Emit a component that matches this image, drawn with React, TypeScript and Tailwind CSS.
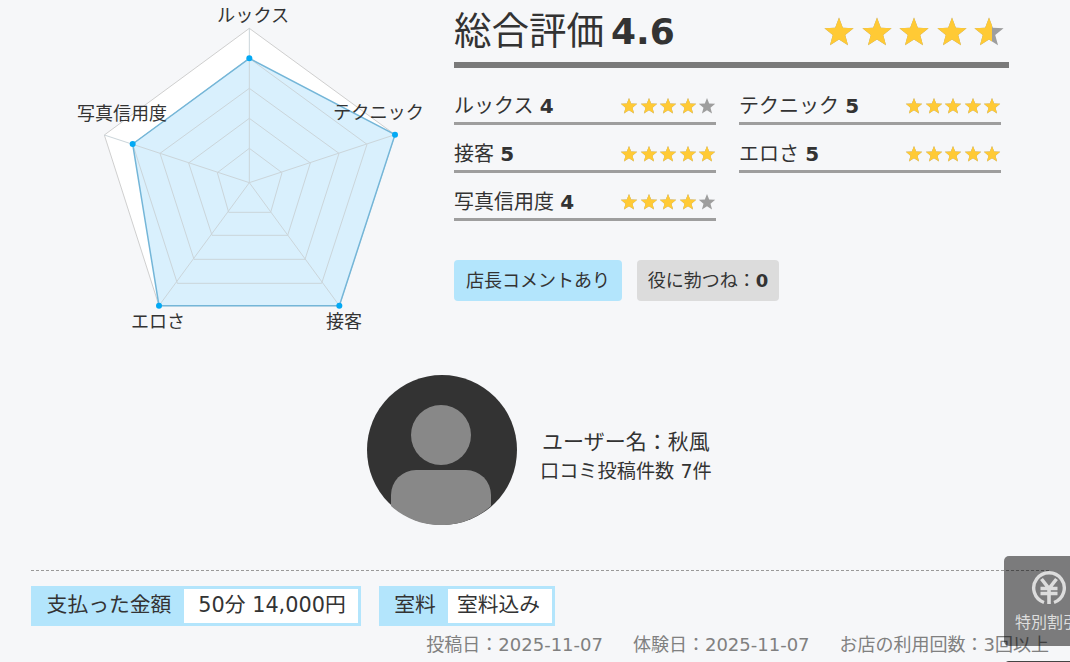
import React from "react";

const FONT = "font-['DejaVu_Sans','Noto_Sans_CJK_JP',sans-serif]";
const pts = (a: number[][]) => a.map((p) => p.join(",")).join(" ");
const center = [568, 548];
const rings = [
  [[568, 85], [1005, 404], [838, 917], [297, 917], [133, 405]],
  [[568, 175], [921, 433], [785, 850], [352, 850], [218, 432]],
  [[568, 265], [837, 460], [735, 778], [402, 778], [300, 460]],
  [[568, 355], [751, 489], [683, 706], [456, 706], [386, 489]],
  [[568, 445], [666, 518], [632, 637], [506, 637], [472, 518]],
];
const data = [[568, 175], [1005, 404], [838, 917], [297, 917], [218, 432]];

function Radar() {
  return (
    <div className="relative w-[380px] h-[340px] shrink-0 text-[18px] leading-none text-[#333]">
      <svg viewBox="0 0 1140 1020" className="block w-[380px] h-[340px]">
        <polygon points={pts(rings[0])} fill="#ffffff" stroke="#cfcfcf" strokeWidth="3" />
        <polygon points={pts(data)} fill="#d9f0fd" />
        {rings.slice(1).map((r, i) => (
          <polygon key={i} points={pts(r)} fill="none" stroke="#cbd5da" strokeWidth="3" />
        ))}
        {rings[0].map((p, i) => (
          <line key={i} x1={center[0]} y1={center[1]} x2={p[0]} y2={p[1]} stroke="#cbd5da" strokeWidth="3" />
        ))}
        <polygon points={pts(data)} fill="none" stroke="#74b6d8" strokeWidth="4.5" />
        {data.map((p, i) => (
          <circle key={i} cx={p[0]} cy={p[1]} r="9" fill="#03a9f4" />
        ))}
      </svg>
      <span className="absolute left-[157px] top-[7px] text-[18.2px]">ルックス</span>
      <span className="absolute left-[273px] top-[104px] text-[18.2px]">テクニック</span>
      <span className="absolute left-[266px] top-[313px]">接客</span>
      <span className="absolute left-[71px] top-[313px]">エロさ</span>
      <span className="absolute left-[17px] top-[105px]">写真信用度</span>
    </div>
  );
}

const STAR = "12,1.2 14.88,8.74 22.94,9.15 16.66,14.21 18.76,22 12,17.6 5.24,22 7.34,14.21 1.06,9.15 9.12,8.74";

function Star({ size, fill = 1 }: { size: number; fill?: number }) {
  return (
    <span className="relative block shrink-0" style={{ width: size, height: size }}>
      <svg viewBox="0 0 24 24" className="absolute inset-0 w-full h-full">
        <polygon points={STAR} fill="#9e9e9e" />
      </svg>
      <span className="absolute left-0 top-0 h-full overflow-hidden" style={{ width: size * fill }}>
        <svg viewBox="0 0 24 24" className="block" style={{ width: size, height: size }}>
          <polygon points={STAR} fill="#ffca35" />
        </svg>
      </span>
    </span>
  );
}

function Rating({ label, score }: { label: string; score: number }) {
  return (
    <div className="h-[48px] flex items-center justify-between border-b-[3px] border-[#9e9e9e] pt-[13px]">
      <span className="text-[20px] text-[#333]">
        {label} <b className="font-bold">{score}</b>
      </span>
      <span className="flex gap-[1.5px]">
        {[0, 1, 2, 3, 4].map((i) => (
          <Star key={i} size={18} fill={i < score ? 1 : 0} />
        ))}
      </span>
    </div>
  );
}

function Avatar() {
  return (
    <svg viewBox="0 0 150 150" className="block w-[150px] h-[150px] shrink-0">
      <circle cx="75" cy="75" r="75" fill="#333333" />
      <circle cx="74" cy="60" r="30" fill="#888888" />
      <path d="M24 131 V120 a25 25 0 0 1 25 -25 h50 a25 25 0 0 1 25 25 V131 A75 75 0 0 1 24 131 Z" fill="#888888" />
    </svg>
  );
}

export default function App() {
  return (
    <div className={`${FONT} relative w-[1070px] h-[662px] overflow-hidden bg-[#f6f7f9] text-[#333]`}>
      <div className="flex h-[340px]">
        <div className="w-[454px] shrink-0 pl-[60px]">
          <Radar />
        </div>
        <div className="w-[555px] shrink-0">
          <div className="h-[68px] flex items-center justify-between border-b-[6px] border-[#7a7a7a] pr-[4px] pt-[2px]">
            <h1 className="flex items-baseline text-[37.5px] leading-none font-normal">
              <span>総合評価</span>
              <b className="font-bold text-[36px] ml-[7px]">4.6</b>
            </h1>
            <div className="flex gap-[5.5px]">
              {[1, 1, 1, 1, 0.6].map((f, i) => (
                <Star key={i} size={32} fill={f} />
              ))}
            </div>
          </div>
          <div className="grid grid-cols-2 w-[547px] gap-x-[23px] mt-[9px]">
            <Rating label="ルックス" score={4} />
            <Rating label="テクニック" score={5} />
            <Rating label="接客" score={5} />
            <Rating label="エロさ" score={5} />
            <Rating label="写真信用度" score={4} />
          </div>
          <div className="flex gap-[15px] mt-[39px]">
            <div className="h-[41px] w-[168px] flex items-center justify-center rounded-[4px] bg-[#b3e5fc] text-[18px]">
              店長コメントあり
            </div>
            <div className="h-[41px] w-[142px] flex items-center justify-center rounded-[4px] bg-[#dcdcdc] text-[18px]">
              役に勃つね：<b className="font-bold">0</b>
            </div>
          </div>
        </div>
      </div>

      <div className="flex items-center gap-[23px] ml-[367px] mt-[35px]">
        <Avatar />
        <div className="flex flex-col items-center pt-[13px]">
          <div className="text-[21px] leading-[30px]">ユーザー名：秋風</div>
          <div className="text-[19.2px] leading-[30px]">口コミ投稿件数 7件</div>
        </div>
      </div>

      <div className="mx-[31px] mt-[45px] w-[1018px] border-t border-dashed border-[#999]">
        <div className="flex gap-[18px] mt-[15px]">
          <div className="flex h-[40px] w-[330px] items-stretch border-[3px] border-[#b3e5fc] bg-[#b3e5fc] text-[20.8px]">
            <span className="w-[150px] flex items-center justify-center">支払った金額</span>
            <span className="flex-1 bg-white flex items-center justify-center pl-[2px]">50分 14,000円</span>
          </div>
          <div className="flex h-[40px] w-[176px] items-stretch border-[3px] border-[#b3e5fc] bg-[#b3e5fc] text-[20.8px]">
            <span className="w-[66px] flex items-center justify-center">室料</span>
            <span className="flex-1 bg-white flex items-center justify-center pr-[3px]">室料込み</span>
          </div>
        </div>
        <div className="flex justify-end gap-[30px] mt-[7px] text-[18px] leading-[24px] text-[#808080]">
          <span>投稿日：2025-11-07</span>
          <span>体験日：2025-11-07</span>
          <span>お店の利用回数：3回以上</span>
        </div>
      </div>

      <div className="absolute left-[1004px] top-[556px] w-[90px] h-[90px] rounded-l-[5px] bg-black/50 text-[#ddd] text-[16px] leading-none">
        <svg viewBox="0 0 36 36" className="block w-[36px] h-[36px] ml-[26.7px] mt-[14.4px]">
          <path d="M13 32.5 A15.3 15.3 0 1 1 23 32.5" fill="none" stroke="#ddd" strokeWidth="3.4" />
          <path d="M10.5 9 L18 18.5 L25.5 9 M9.5 18.5 h17 M9.5 23.5 h17 M18 18 v16" fill="none" stroke="#ddd" strokeWidth="3.6" />
        </svg>
        <div className="whitespace-nowrap ml-[11px] mt-[9px]">特別割引</div>
      </div>
      <div className="absolute left-[1004px] top-[661px] w-[70px] h-[10px] bg-[#444] rounded-tl-[5px]" />
    </div>
  );
}
